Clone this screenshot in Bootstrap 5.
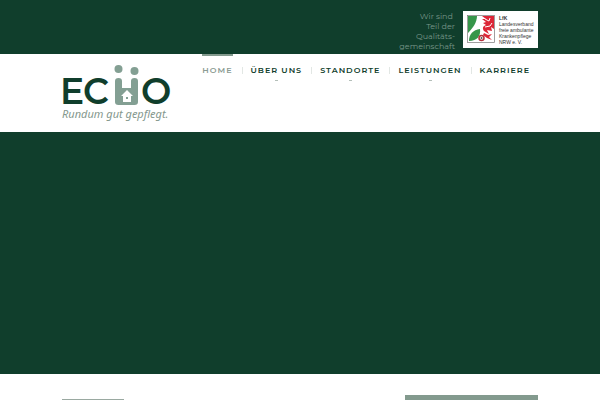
<!DOCTYPE html>
<html lang="de">
<head>
<meta charset="utf-8">
<meta name="viewport" content="width=device-width, initial-scale=1">
<title>ECHO – Rundum gut gepflegt.</title>
<link href="https://cdn.jsdelivr.net/npm/bootstrap@5.3.0/dist/css/bootstrap.min.css" rel="stylesheet">
<style>
:root { --green: #103e2c; --sage: #839a8e; }
body { font-family: Montserrat, Inter, "Liberation Sans", sans-serif; background: #fff; }
.page-wrap { padding-left: 62px; padding-right: 62px; }
.band { background: var(--green); }
.topbar { padding-top: 11px; padding-bottom: 3px; }
.claim { font-size: 8px; line-height: 10px; color: #78978a; white-space: pre-line; }
.partner { background: #fff; padding: 4px; width: 75px; height: 37px; }
.partner-text { font: 5px/6px "Liberation Sans", sans-serif; color: #333; white-space: nowrap; }
.brand-logo { margin-top: 10px; margin-bottom: 8px; }
.main-menu { padding-right: 8px; }
.menu-link { display: block; font-size: 8px; line-height: 12px; font-weight: 600; letter-spacing: 1px; color: var(--green); text-decoration: none; padding-top: 8px; border-top: 2px solid transparent; white-space: nowrap; }
.menu-link.active { color: #8b9c94; border-color: var(--sage); }
.divider { width: 1px; height: 7px; margin: 13px 8px 0 9px; background: #e2e7e4; }
.caret { width: 3px; height: 1px; margin: 4px auto 0; background: #b4bfb9; }
.stage { min-height: 242px; }
.heading-line { width: 62px; height: 1px; margin-top: 25px; background: #9aa9a1; }
.side-panel { width: 133px; margin-top: 21px; background: var(--sage); }
</style>
</head>
<body class="min-vh-100 d-flex flex-column">
<div class="band">
  <div class="page-wrap topbar d-flex justify-content-end align-items-start">
    <p class="claim text-end mb-0 me-2">Wir sind&nbsp;
Teil der
Qualitäts-
gemeinschaft</p>
    <div class="partner d-flex">
      <svg width="28" height="28" viewBox="0 0 28 28" aria-hidden="true">
        <rect x=".5" y=".5" width="27" height="27" fill="#fff" stroke="#777" stroke-width=".7"/>
        <path d="M1 1h9C10 7 6 13 1 18z" fill="#36964a"/>
        <path d="M2 26c0-7 4-11 11-12 1 7-3 12-11 12z" fill="#36964a"/>
        <path d="M15 1h12v13l-3-2 1 4-5-1 2 4-5-3c-2-3-1-5 2-6l-3-2 3-1-4-3 4 0z" fill="#dc2637"/>
        <path d="M18 4l4 2 1-3M18 12l5-1 2-3" fill="none" stroke="#fff"/>
        <path d="M17 18l4 2 4-1-3 3 3 3-5-2-4-3z" fill="#dc2637"/>
        <circle cx="14.500" cy="23" r="2.500" fill="#fff" stroke="#b5303a" stroke-width="1.500"/>
        <circle cx="14.500" cy="23" r="1" fill="#555"/>
      </svg>
      <div class="partner-text ms-1"><strong>LfK</strong><br>Landesverband<br>freie ambulante<br>Krankenpflege<br>NRW e. V.</div>
    </div>
  </div>
</div>
<header class="page-wrap d-flex justify-content-between align-items-start">
  <a href="#" class="brand-logo" aria-label="ECHO Startseite">
    <svg class="d-block overflow-visible" width="110" height="60" viewBox="0 0 110 60">
      <g fill="#103e2c" font-family="Montserrat, Inter, sans-serif" font-weight="600" font-size="36">
        <text x="-2" y="40">E</text><text x="21" y="40">C</text><text x="79" y="40">O</text>
      </g>
      <g fill="#839f93">
        <circle cx="56.500" cy="5" r="4"/><circle cx="72.500" cy="7" r="4"/>
        <path d="M53 17q0-3 3.500-3t3.500 3v7h9v-7q0-3 3.500-3t3.500 3v21q0 3-3.500 3h-16q-3.500 0-3.500-3z"/>
      </g>
      <path d="M65 26l6 6h-2v6h-8v-6h-2z" fill="#fff"/>
      <path d="M64 33h2v2h-2z" fill="#839f93"/>
      <text x="0" y="54" font-family="'Noto Sans', sans-serif" font-style="italic" font-size="11" fill="#84978d">Rundum gut gepflegt.</text>
    </svg>
  </a>
  <nav class="main-menu d-flex align-items-start">
    <a class="menu-link active" href="#" aria-current="page">HOME</a>
    <span class="divider"></span>
    <a class="menu-link" href="#">ÜBER UNS<span class="caret d-block"></span></a>
    <span class="divider"></span>
    <a class="menu-link" href="#">STANDORTE<span class="caret d-block"></span></a>
    <span class="divider"></span>
    <a class="menu-link" href="#">LEISTUNGEN<span class="caret d-block"></span></a>
    <span class="divider"></span>
    <a class="menu-link" href="#">KARRIERE</a>
  </nav>
</header>
<section class="band stage"></section>
<main class="page-wrap flex-grow-1 d-flex justify-content-between">
  <div class="heading-line"></div>
  <aside class="side-panel"></aside>
</main>
<script src="https://cdn.jsdelivr.net/npm/bootstrap@5.3.0/dist/js/bootstrap.bundle.min.js"></script>
</body>
</html>
